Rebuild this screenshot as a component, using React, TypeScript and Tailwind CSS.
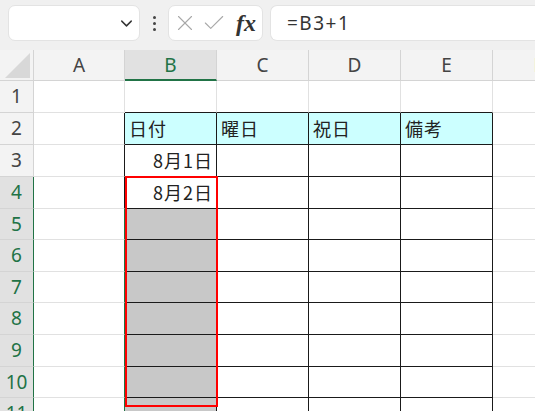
import React from "react";
import { ChevronDown, X, Check } from "lucide-react";

const cols = [
  { k: "A", w: "w-[91px]" },
  { k: "B", w: "w-[92px]" },
  { k: "C", w: "w-[92px]" },
  { k: "D", w: "w-[92px]" },
  { k: "E", w: "w-[92px]" },
  { k: "F", w: "w-[92px]" },
];

const rowH = [
  "h-[32px]",
  "h-[32px]",
  "h-[32px]",
  "h-[32px]",
  "h-[31px]",
  "h-[32px]",
  "h-[31px]",
  "h-[32px]",
  "h-[32px]",
  "h-[31px]",
  "h-[32px]",
];

const data: Record<string, { t: string; right?: boolean }> = {
  B2: { t: "日付" },
  C2: { t: "曜日" },
  D2: { t: "祝日" },
  E2: { t: "備考" },
  B3: { t: "8月1日", right: true },
  B4: { t: "8月2日", right: true },
};

function cellClass(r: number, c: string): string {
  const inTableCol = c === "B" || c === "C" || c === "D" || c === "E";
  let right = "border-r-[#e1e1e1]";
  let bottom = "border-b-[#e1e1e1]";
  let bg = "bg-white";
  if (inTableCol && r >= 2) {
    right = "border-r-[#1a1a1a]";
    bottom = "border-b-[#1a1a1a]";
  }
  if (inTableCol && r === 1) bottom = "border-b-[#1a1a1a]";
  if (c === "A" && r >= 2) right = r >= 5 ? "border-r-[#217346]" : "border-r-[#1a1a1a]";
  if (r === 2 && inTableCol) bg = "bg-[#ccffff]";
  if (c === "B" && r >= 5) bg = "bg-[#c8c8c8]";
  return `${right} ${bottom} ${bg}`;
}

export default function App() {
  return (
    <div className="relative h-[411px] w-[535px] overflow-hidden bg-[#f0f0f0] font-['Noto_Sans',sans-serif]">
      {/* toolbar */}
      <div className="flex h-[50px] items-start pt-[5px]">
        <div className="ml-[8px] flex h-[36px] w-[132px] items-center justify-end rounded-[7px] border border-[#e3e3e3] bg-white pr-[3px]">
          <ChevronDown size={19} strokeWidth={1.8} color="#333" />
        </div>
        <div className="flex h-[36px] w-[28px] flex-col items-center justify-center gap-[3px]">
          <span className="block h-[3px] w-[3px] rounded-full bg-[#444]" />
          <span className="block h-[3px] w-[3px] rounded-full bg-[#444]" />
          <span className="block h-[3px] w-[3px] rounded-full bg-[#444]" />
        </div>
        <div className="flex h-[36px] w-[95px] items-center rounded-[7px] border border-[#e3e3e3] bg-white pl-[3px]">
          <X size={26} strokeWidth={1} color="#a8a8a8" />
          <Check size={26} strokeWidth={1} color="#a8a8a8" className="ml-[3px]" />
          <span className="ml-[9px] font-['Liberation_Serif',serif] text-[24px] italic font-bold leading-none text-[#333]">
            fx
          </span>
        </div>
        <div className="ml-[7px] flex h-[36px] flex-1 items-center rounded-l-[7px] border border-r-0 border-[#e3e3e3] bg-white pl-[16px] text-[19px] tracking-[1.5px] text-[#333]">
          =B3+1
        </div>
      </div>

      {/* column header */}
      <div className="flex h-[31px]">
        <div className="flex h-[31px] w-[34px] shrink-0 items-end justify-end border-r border-b border-r-[#d4d4d4] border-b-[#d4d4d4] bg-[#f3f3f3] pb-[2px] pr-[2px]">
          <svg width="26" height="25" viewBox="0 0 26 25">
            <polygon points="25,0 25,25 0,25" fill="#d8d8d8" />
          </svg>
        </div>
        {cols.map((c) =>
          c.k === "B" ? (
            <div
              key={c.k}
              className={`${c.w} flex h-[31px] shrink-0 items-center justify-center border-r border-b-2 border-r-[#d4d4d4] border-b-[#217346] bg-[#e1e1e1] pt-[1px] text-[19px] text-[#217346]`}
            >
              {c.k}
            </div>
          ) : (
            <div
              key={c.k}
              className={`${c.w} flex h-[31px] shrink-0 items-center justify-center border-r border-b border-r-[#d4d4d4] border-b-[#d4d4d4] bg-[#f3f3f3] text-[19px] text-[#444]`}
            >
              {c.k}
            </div>
          )
        )}
      </div>

      {/* rows */}
      {rowH.map((h, i) => {
        const r = i + 1;
        const sel = r >= 4;
        return (
          <div key={r} className={`flex ${h}`}>
            <div
              className={`flex w-[34px] shrink-0 items-center justify-center border-r border-b border-b-[#d4d4d4] text-[19px] ${
                sel
                  ? "border-r-[#217346] bg-[#e1e1e1] text-[#217346]"
                  : "border-r-[#d4d4d4] bg-[#f3f3f3] text-[#444]"
              }`}
            >
              {r}
            </div>
            {cols.map((c) => {
              const d = data[`${c.k}${r}`];
              return (
                <div
                  key={c.k}
                  className={`${c.w} flex shrink-0 items-center border-r border-b ${cellClass(r, c.k)} ${
                    d?.right ? "justify-end pr-[3px] tracking-[1px]" : "justify-start pl-[4px] tracking-[1px]"
                  } font-['Noto_Sans_CJK_JP',sans-serif] text-[18px] text-[#222]`}
                >
                  {d ? d.t : ""}
                </div>
              );
            })}
          </div>
        );
      })}

      {/* selection overlay */}
      <div className="pointer-events-none absolute left-[125px] top-[176px] h-[231px] w-[93px] border-2 border-[#ff0000]" />
    </div>
  );
}
